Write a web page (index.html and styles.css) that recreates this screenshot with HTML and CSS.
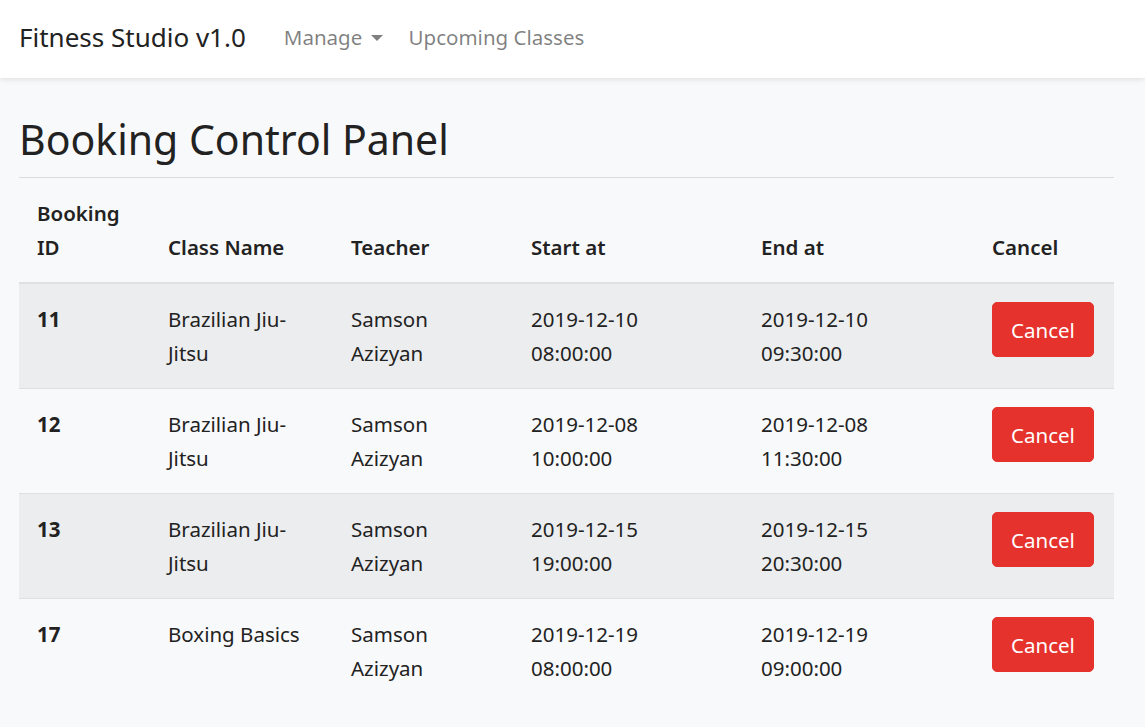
FILE: index.html
```html
<!DOCTYPE html>
<html lang="en">
<head>
<meta charset="utf-8">
<title>Fitness Studio v1.0</title>
<link rel="stylesheet" href="styles.css">
</head>
<body>
<nav class="navbar">
  <span class="brand">Fitness Studio v1.0</span>
  <ul class="nav">
    <li class="nav-link">Manage <span class="caret"></span></li>
    <li class="nav-link">Upcoming Classes</li>
  </ul>
</nav>
<main class="container">
  <h1 class="title">Booking Control Panel</h1>
  <hr class="divider">
  <table class="bookings">
    <colgroup>
      <col class="c-id"><col class="c-class"><col class="c-teacher"><col class="c-start"><col class="c-end"><col class="c-cancel">
    </colgroup>
    <thead>
      <tr><th>Booking ID</th><th>Class Name</th><th>Teacher</th><th>Start at</th><th>End at</th><th>Cancel</th></tr>
    </thead>
    <tbody>
      <tr><th>11</th><td>Brazilian Jiu-Jitsu</td><td>Samson Azizyan</td><td class="date">2019-12-10 08:00:00</td><td class="date">2019-12-10 09:30:00</td><td><button class="btn-danger">Cancel</button></td></tr>
      <tr><th>12</th><td>Brazilian Jiu-Jitsu</td><td>Samson Azizyan</td><td class="date">2019-12-08 10:00:00</td><td class="date">2019-12-08 11:30:00</td><td><button class="btn-danger">Cancel</button></td></tr>
      <tr><th>13</th><td>Brazilian Jiu-Jitsu</td><td>Samson Azizyan</td><td class="date">2019-12-15 19:00:00</td><td class="date">2019-12-15 20:30:00</td><td><button class="btn-danger">Cancel</button></td></tr>
      <tr><th>17</th><td>Boxing Basics</td><td>Samson Azizyan</td><td class="date">2019-12-19 08:00:00</td><td class="date">2019-12-19 09:00:00</td><td><button class="btn-danger">Cancel</button></td></tr>
    </tbody>
  </table>
</main>
</body>
</html>
```
FILE: styles.css
```css
* { box-sizing: border-box; }
html, body { margin: 0; padding: 0; }
body {
  font-family: "Noto Sans", "Open Sans", sans-serif;
  font-size: 20.5px;
  line-height: 34px;
  color: #222;
  background: #f8f9fa;
}
.navbar {
  height: 78px;
  background: #fff;
  display: flex;
  align-items: center;
  padding: 0 19px 4px;
  box-shadow: 0 1px 6px rgba(0,0,0,0.12);
  position: relative;
}
.brand {
  font-size: 26px;
  color: #222;
  margin-right: 38px;
}
.nav {
  display: flex;
  list-style: none;
  margin: 0;
  padding: 0;
  gap: 26px;
}
.nav-link {
  color: rgba(0,0,0,0.5);
  font-size: 20.5px;
}
.caret {
  display: inline-block;
  width: 0; height: 0;
  border-left: 6px solid transparent;
  border-right: 6px solid transparent;
  border-top: 6px solid rgba(0,0,0,0.5);
  vertical-align: 4px;
  margin-left: 3px;
}
.container {
  padding: 34px 31px 0 19px;
}
.title {
  font-size: 41px;
  font-weight: 400;
  line-height: 54px;
  margin: 0;
  color: #222;
}
.divider {
  border: 0;
  border-top: 1px solid #dcdcdc;
  margin: 11px 0 0 0;
}
.bookings {
  width: 100%;
  border-collapse: collapse;
  table-layout: fixed;
}
.c-id { width: 131px; }
.c-class { width: 183px; }
.c-teacher { width: 180px; }
.c-start { width: 230px; }
.c-end { width: 231px; }
.c-cancel { width: 140px; }
.bookings th, .bookings td {
  padding: 18px;
  text-align: left;
  vertical-align: top;
}
.bookings td.date { padding-right: 70px; }
.bookings thead th {
  vertical-align: bottom;
  font-weight: 600;
  border-bottom: 2px solid #dfe0e2;
}
.bookings tbody th { font-weight: 700; }
.bookings tbody tr { border-top: 1px solid #dfe0e2; }
.bookings tbody tr:first-child { border-top: 0; }
.bookings tbody tr:nth-child(odd) { background: #ecedee; }
.btn-danger {
  font-family: inherit;
  font-size: 20.5px;
  line-height: 34px;
  color: #fff;
  background: #e5322d;
  border: 1px solid #e5322d;
  border-radius: 5px;
  padding: 9.5px 18px;
  cursor: pointer;
}
```
